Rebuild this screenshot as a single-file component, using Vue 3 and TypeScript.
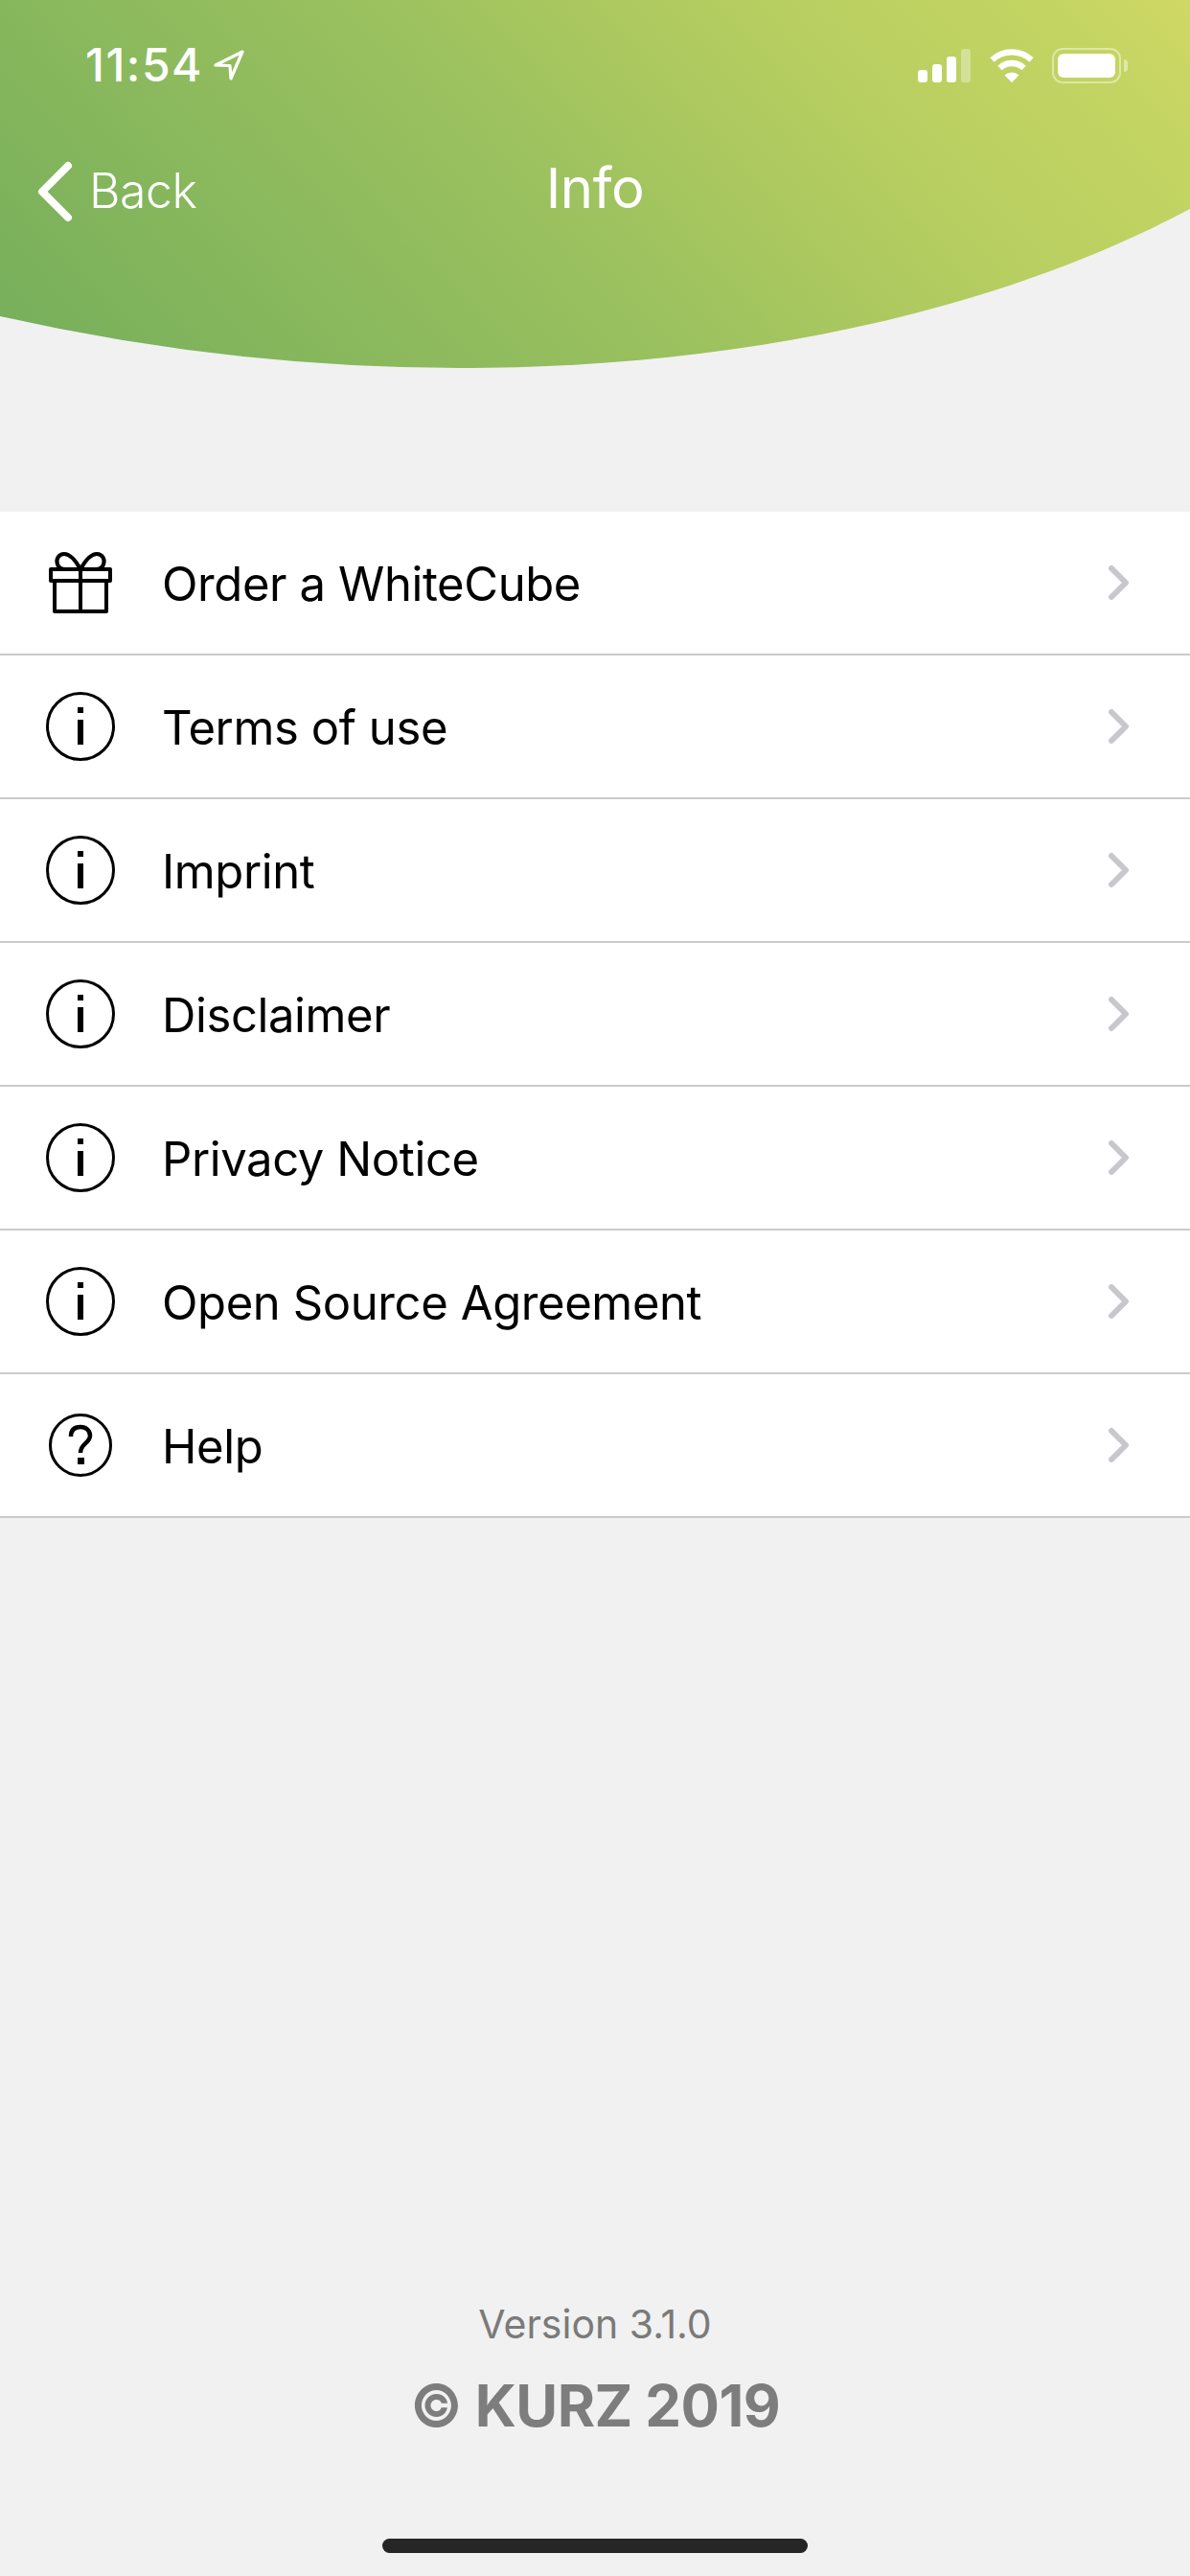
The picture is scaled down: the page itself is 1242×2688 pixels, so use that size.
<template>
  <div class="page">
    <header class="header">
      <div class="status">
        <div class="status-left">
          <span class="time">11:54</span>
          <svg class="arrow" width="32" height="32" viewBox="0 0 32 32">
            <path d="M30 2 L2 16 L17 16.5 L18 30 Z" fill="none" stroke="#fff" stroke-width="3.2" stroke-linejoin="round" />
          </svg>
        </div>
        <div class="status-right">
          <div class="signal">
            <i class="bar" v-for="b in bars" :key="b" :style="{ height: b + 'px' }"></i>
            <i class="bar off"></i>
          </div>
          <svg class="wifi" width="48" height="36" viewBox="0 0 48 36">
            <path d="M3.5 12.5 A30 30 0 0 1 44.5 12.5" fill="none" stroke="#fff" stroke-width="6.4" />
            <path d="M11.5 21 A18 18 0 0 1 36.5 21" fill="none" stroke="#fff" stroke-width="6.4" />
            <path d="M24 36 L16.5 28.5 A11 11 0 0 1 31.500 28.5 Z" fill="#fff" />
          </svg>
          <div class="battery">
            <div class="battery-body"><div class="battery-fill"></div></div>
            <div class="battery-cap"></div>
          </div>
        </div>
      </div>
      <nav class="nav">
        <div class="back">
          <svg width="40" height="66" viewBox="0 0 40 66">
            <path d="M33 6 L6 33 L33 60" fill="none" stroke="#fff" stroke-width="8" stroke-linecap="round" stroke-linejoin="round" />
          </svg>
          <span>Back</span>
        </div>
        <h1 class="title">Info</h1>
        <div></div>
      </nav>
    </header>

    <ul class="list">
      <li class="row" v-for="item in items" :key="item.label">
        <div class="row-icon">
          <svg v-if="item.icon === 'gift'" width="70" height="66" viewBox="0 0 70 66">
            <g fill="none" stroke="#000" stroke-width="4" stroke-linejoin="round">
              <path d="M4 19 H66 V31 H4 Z" />
              <path d="M8 31 V63 H62 V31" />
              <path d="M35 19 V63" />
              <path d="M35 19 C30 10 24 3 18 3 C12 3 9 9 11 14 C12 17 15 19 19 19" />
              <path d="M35 19 C40 10 46 3 52 3 C58 3 61 9 59 14 C58 17 55 19 51 19" />
            </g>
          </svg>
          <svg v-else-if="item.icon === 'info'" width="72" height="72" viewBox="0 0 72 72">
            <circle cx="36" cy="36" r="34.500" fill="none" stroke="#000" stroke-width="3" />
            <rect x="33" y="16" width="6" height="6" />
            <rect x="33" y="29" width="6" height="26" />
          </svg>
          <svg v-else width="66" height="66" viewBox="0 0 66 66">
            <circle cx="33" cy="33" r="31.500" fill="none" stroke="#000" stroke-width="3" />
            <path d="M23 24 C23 17 27 14 33 14 C39 14 43 18 43 23 C43 31 33 31 33 41" fill="none" stroke="#000" stroke-width="4.500" />
            <rect x="30" y="46" width="7" height="7" />
          </svg>
        </div>
        <span class="row-label">{{ item.label }}</span>
        <svg class="row-chevron" width="24" height="40" viewBox="0 0 24 40">
          <path d="M4 5 L19 20 L4 35" fill="none" stroke="#c7c7cc" stroke-width="6" stroke-linecap="round" stroke-linejoin="round" />
        </svg>
      </li>
    </ul>

    <footer class="footer">
      <div class="version">Version 3.1.0</div>
      <div class="copyright">© KURZ 2019</div>
      <div class="home-bar"></div>
    </footer>
  </div>
</template>

<script setup lang="ts">
interface MenuItem {
  label: string
  icon: 'gift' | 'info' | 'help'
}

const bars: number[] = [13, 19, 27]

const items: MenuItem[] = [
  { label: 'Order a WhiteCube', icon: 'gift' },
  { label: 'Terms of use', icon: 'info' },
  { label: 'Imprint', icon: 'info' },
  { label: 'Disclaimer', icon: 'info' },
  { label: 'Privacy Notice', icon: 'info' },
  { label: 'Open Source Agreement', icon: 'info' },
  { label: 'Help', icon: 'help' }
]
</script>

<style>
html,
body {
  margin: 0;
  background: #f1f1f1;
}
</style>

<style scoped>
.page {
  width: 1242px;
  height: 2688px;
  display: flex;
  flex-direction: column;
  background: #f1f1f1;
  font-family: Inter, 'Liberation Sans', sans-serif;
  overflow: hidden;
}

.header {
  height: 384px;
  flex: none;
  box-sizing: border-box;
  padding-top: 48px;
  color: #fff;
  background: linear-gradient(48deg, #79b05b 5%, #9dc25f 48%, #abc85f 60%, #b9cf61 74%, #c3d462 90%, #d0d864 100%);
  clip-path: path('M0 0 H1242 V218 C1020 336 740 384 480 384 Q240 384 0 330 Z');
}

.status {
  height: 40px;
  display: flex;
  justify-content: space-between;
  align-items: center;
  padding: 0 65px 0 89px;
}

.status-left {
  display: flex;
  align-items: center;
  gap: 11px;
}

.time {
  font-size: 48px;
  font-weight: 500;
  letter-spacing: 1.5px;
  line-height: 40px;
}

.status-right {
  display: flex;
  align-items: center;
}

.signal {
  display: flex;
  align-items: flex-end;
  gap: 5px;
  height: 35px;
}

.bar {
  display: block;
  width: 10px;
  height: 35px;
  background: #fff;
  border-radius: 3px;
}

.bar.off {
  opacity: 0.35;
}

.wifi {
  margin-left: 19px;
}

.battery {
  display: flex;
  align-items: center;
  margin-left: 18px;
}

.battery-body {
  width: 72px;
  height: 37px;
  box-sizing: border-box;
  padding: 4px;
  border: 2px solid rgba(255, 255, 255, 0.45);
  border-radius: 11px;
}

.battery-fill {
  height: 100%;
  background: #fff;
  border-radius: 6px;
}

.battery-cap {
  width: 4px;
  height: 13px;
  margin-left: 3px;
  background: rgba(255, 255, 255, 0.45);
  border-radius: 0 4px 4px 0;
}

.nav {
  margin-top: 73px;
  display: grid;
  grid-template-columns: 1fr auto 1fr;
  align-items: center;
  height: 66px;
}

.back {
  display: flex;
  align-items: center;
  gap: 15px;
  padding-left: 38px;
  font-size: 50px;
  font-weight: 350;
  letter-spacing: -0.5px;
}

.back span {
  margin-bottom: 3px;
}

.title {
  margin: 0 0 8px;
  font-size: 58px;
  font-weight: 400;
  letter-spacing: -0.5px;
}

.list {
  list-style: none;
  margin: 150px 0 0;
  padding: 0;
  background: #fff;
}

.row {
  height: 150px;
  box-sizing: border-box;
  display: flex;
  align-items: center;
  border-bottom: 2px solid #cbcbcb;
}

.row-icon {
  width: 169px;
  flex: none;
  display: flex;
  justify-content: center;
  padding-right: 1px;
  box-sizing: border-box;
}

.row-icon svg {
  display: block;
}

.row-label {
  flex: 1;
  padding-top: 3px;
  font-size: 49px;
  color: #000;
  letter-spacing: -0.4px;
}

.row-chevron {
  margin-right: 62px;
}

.footer {
  margin-top: auto;
  display: flex;
  flex-direction: column;
  align-items: center;
}

.version {
  font-size: 41px;
  line-height: 50px;
  color: #7a7a7a;
}

.copyright {
  margin-top: 24px;
  font-size: 60px;
  font-weight: 700;
  line-height: 72px;
  letter-spacing: -0.6px;
  color: #7d7d7d;
}

.home-bar {
  width: 444px;
  height: 15px;
  margin: 103px 0 24px;
  background: #262626;
  border-radius: 8px;
}
</style>
